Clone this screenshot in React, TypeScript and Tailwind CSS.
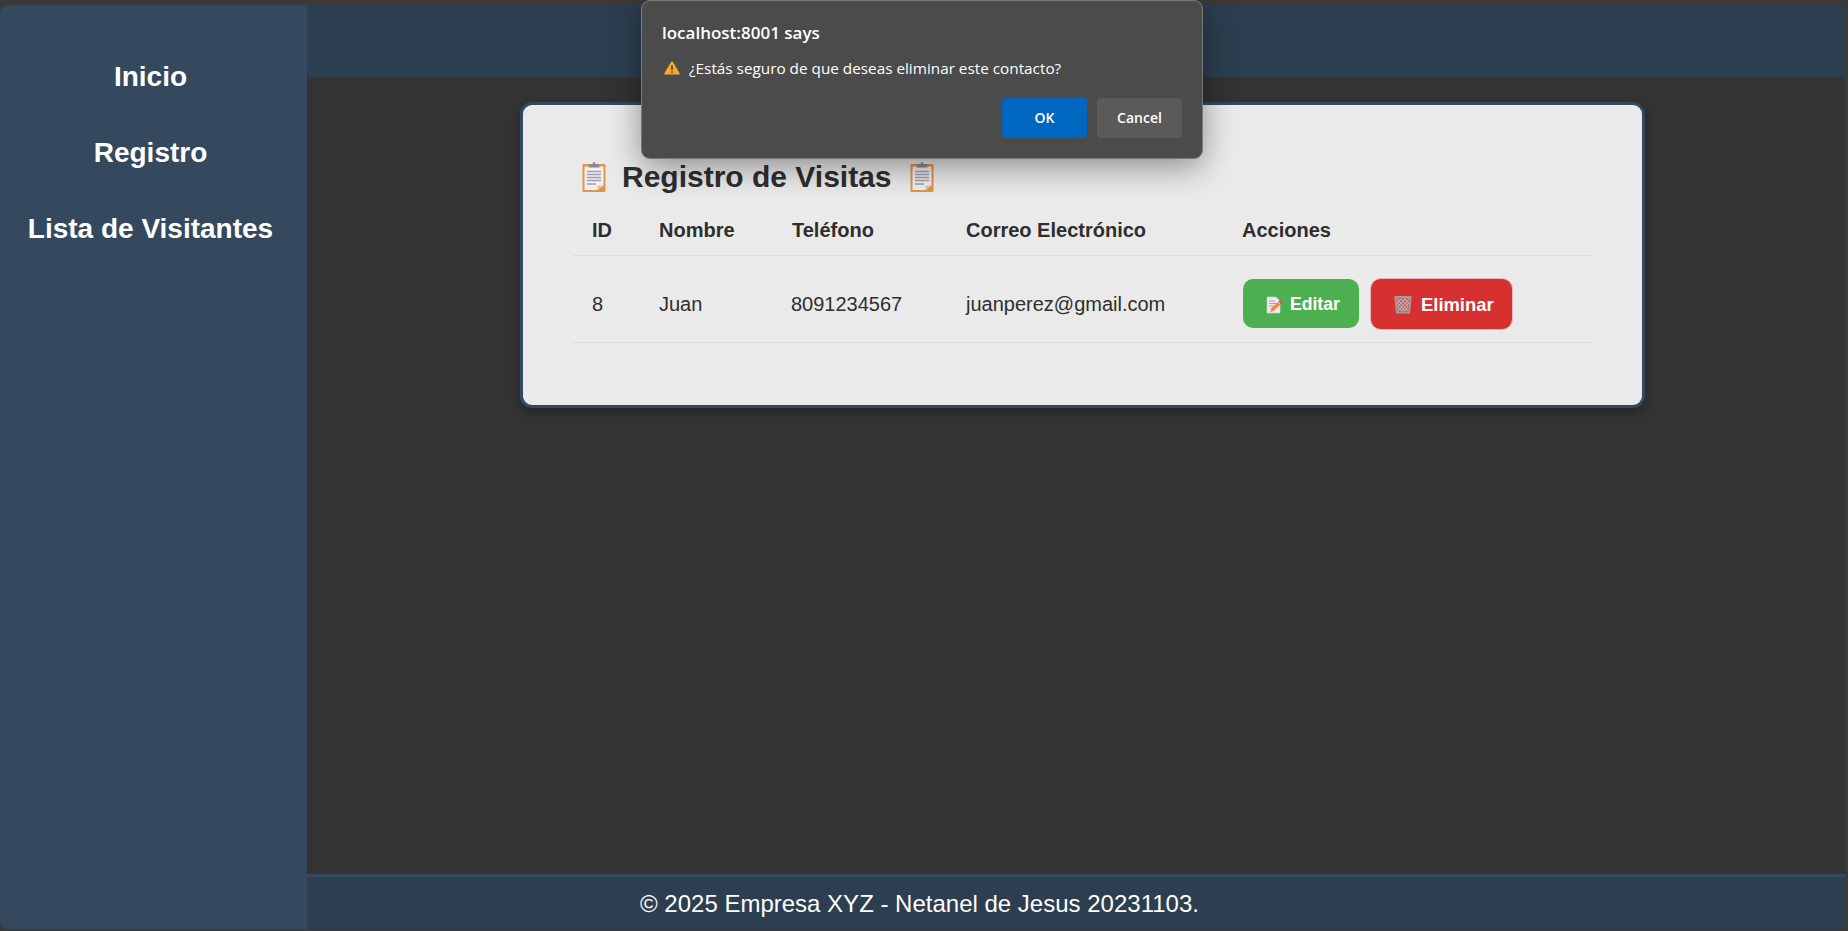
import React from "react";

const ClipboardIcon: React.FC = () => (
  <svg width="24" height="30" viewBox="0 0 24 30" className="shrink-0">
    <rect x="0.500" y="2" width="23" height="28" rx="1" fill="#e29547" />
    <path d="M2.500 4.500h19v19l-6 4.500h-13z" fill="#f1eef5" />
    <path d="M15.500 28v-4.500h6z" fill="#d9c6b4" />
    <path d="M7 4.500V2h3.500L11.500 0h1l1 2H17v2.500l1 1H6z" fill="#8a8a8a" />
    <path d="M5 9.500h14M5 12.500h14M5 15.500h14M5 18.500h14M5 22h9" stroke="#a3a1a6" strokeWidth="1.300" />
  </svg>
);

const MemoIcon: React.FC = () => (
  <svg width="17" height="18" viewBox="0 0 17 18" className="shrink-0">
    <path d="M1 1h9l4 4v12H1z" fill="#eee9f3" stroke="#d5d0da" strokeWidth="0.6" />
    <path d="M3 5h6M3 7.500h8M3 10h5" stroke="#a99fb8" strokeWidth="1" />
    <path d="M4 16l1-3.500L12 6l2.500 2.500L7.500 15z" fill="#f58a2e" />
    <path d="M12.500 5.500l1.300-1.300 2.600 2.600-1.300 1.300z" fill="#ef3f6a" />
  </svg>
);

const TrashIcon: React.FC = () => (
  <svg width="18" height="19" viewBox="0 0 18 19" className="shrink-0">
    <path d="M0.500 1h17v2l-1.500 15.500H2L0.500 3z" fill="#a39b9b" />
    <path d="M2.500 3.500h13l-1.300 13.500H3.800z" fill="#cc5c5e" />
    <path
      d="M3 4l11 12M7 4l7.500 8M11 4l4 4.500M3.500 8l7.500 8.500M4 12l4 4.500M15 4L4 16M11 4l-7.500 8M7 4L3 8.500M14.500 8l-7.500 8.500M14 12l-4 4.500"
      stroke="#c2baba"
      strokeWidth="1"
    />
  </svg>
);

const WarningIcon: React.FC = () => (
  <svg width="16" height="14" viewBox="0 0 15 14" preserveAspectRatio="none" className="shrink-0">
    <path d="M7.500 0.500c.4 0 .7.200.9.500l6.300 11.300c.4.700-.1 1.200-.8 1.200H1.100c-.7 0-1.200-.5-.8-1.200L6.600 1c.2-.3.500-.5.900-.5z" fill="#f9a72b" />
    <path d="M7.500 4.500v4.500M7.500 10.300v1.400" stroke="#2e2a22" strokeWidth="1.300" />
  </svg>
);

const navItems = ["Inicio", "Registro", "Lista de Visitantes"];
const columns = ["ID", "Nombre", "Teléfono", "Correo Electrónico", "Acciones"];

const App: React.FC = () => {
  return (
    <div className="relative h-screen w-full overflow-hidden bg-[#3a3a3a] pt-[5px] pb-[2px] pr-[3px] font-['Liberation_Sans',Arial,sans-serif]">
      <div className="flex h-full rounded-[8px] overflow-hidden">
        {/* Sidebar */}
        <aside className="w-[307px] shrink-0 bg-[#34495e] pt-[53px] pr-[6px] flex flex-col items-center">
          {navItems.map((item) => (
            <a
              key={item}
              className="h-[76px] text-[28px] leading-[37px] font-bold text-white text-center"
            >
              {item}
            </a>
          ))}
        </aside>

        <div className="flex-1 flex flex-col min-w-0">
          <header className="h-[72px] shrink-0 bg-[#2c3e50]" />

          <main className="flex-1 bg-[#333333] pt-[25px] pl-[213px]">
            {/* Card */}
            <section className="w-[1125px] h-[306px] rounded-[12px] border-[3px] border-[#34495e] bg-[#eaeaea] shadow-[0_4px_10px_rgba(0,0,0,0.3)] pt-[54px] px-[49px]">
              <h2 className="flex items-center h-[36px] pl-[10px] gap-[16px] text-[30px] leading-[36px] font-bold text-[#2e2e2e]">
                <ClipboardIcon />
                <span className="mr-[2px]">Registro de Visitas</span>
                <ClipboardIcon />
              </h2>
              <table className="w-[1019px] ml-[1px] table-fixed border-collapse mt-[13px] text-[#2e2e2e]">
                <colgroup>
                  <col className="w-[66px]" />
                  <col className="w-[133px]" />
                  <col className="w-[174px]" />
                  <col className="w-[276px]" />
                  <col />
                </colgroup>
                <thead>
                  <tr className="h-[47px] border-b border-[#dcdcdc]">
                    {columns.map((col) => (
                      <th key={col} className="pl-[20px] first:pl-[19px] pb-[2px] text-left text-[20px] font-bold">
                        {col}
                      </th>
                    ))}
                  </tr>
                </thead>
                <tbody>
                  <tr className="h-[87px] border-b border-[#dcdcdc] text-[20px]">
                    <td className="pl-[19px] pt-[10px]">8</td>
                    <td className="pl-[20px] pt-[10px]">Juan</td>
                    <td className="pl-[19px] pt-[10px]">8091234567</td>
                    <td className="pl-[20px] pt-[10px]">juanperez@gmail.com</td>
                    <td className="pl-[21px] pt-[10px]">
                      <div className="flex items-center gap-[11px]">
                        <button className="flex items-center gap-[7px] pl-[23px] pt-[2px] w-[116px] h-[49px] rounded-[10px] bg-[#4caf50] text-white text-[17.6px] font-bold">
                          <MemoIcon />
                          Editar
                        </button>
                        <button className="flex items-center gap-[9px] pl-[23px] pt-[2px] w-[143px] h-[52px] rounded-[11px] border border-[#e8b4b6] bg-[#d63031] text-white text-[18.4px] font-bold">
                          <TrashIcon />
                          Eliminar
                        </button>
                      </div>
                    </td>
                  </tr>
                </tbody>
              </table>
            </section>
          </main>

          <footer className="h-[55px] shrink-0 border-t-[3px] border-[#34495e] bg-[#2c3e50] pl-[333px] text-[24px] leading-[54px] text-white">
            © 2025 Empresa XYZ - Netanel de Jesus 20231103.
          </footer>
        </div>
      </div>

      {/* Browser confirm dialog */}
      <div className="absolute left-[641px] top-0 w-[562px] h-[159px] rounded-[9px] border border-[#7a7a7a] bg-[#4b4b4b] shadow-[0_8px_32px_rgba(0,0,0,0.4)] pt-[21px] px-[20px] font-['Open_Sans',sans-serif] text-white">
        <div className="text-[17px] leading-[22px] font-semibold">localhost:8001 says</div>
        <div className="flex items-center gap-[9px] mt-[13px] h-[22px] pl-[2px] text-[15.300px] leading-[22px]">
          <WarningIcon />
          <span>¿Estás seguro de que deseas eliminar este contacto?</span>
        </div>
        <div className="flex justify-end gap-[10px] mt-[19px]">
          <button className="w-[85px] h-[40px] pb-[2px] rounded-[4px] bg-[#0067c0] text-[14px] font-semibold">OK</button>
          <button className="w-[85px] h-[40px] pb-[2px] rounded-[4px] bg-[#5a5a5a] text-[14px] font-semibold">Cancel</button>
        </div>
      </div>
    </div>
  );
};

export default App;
